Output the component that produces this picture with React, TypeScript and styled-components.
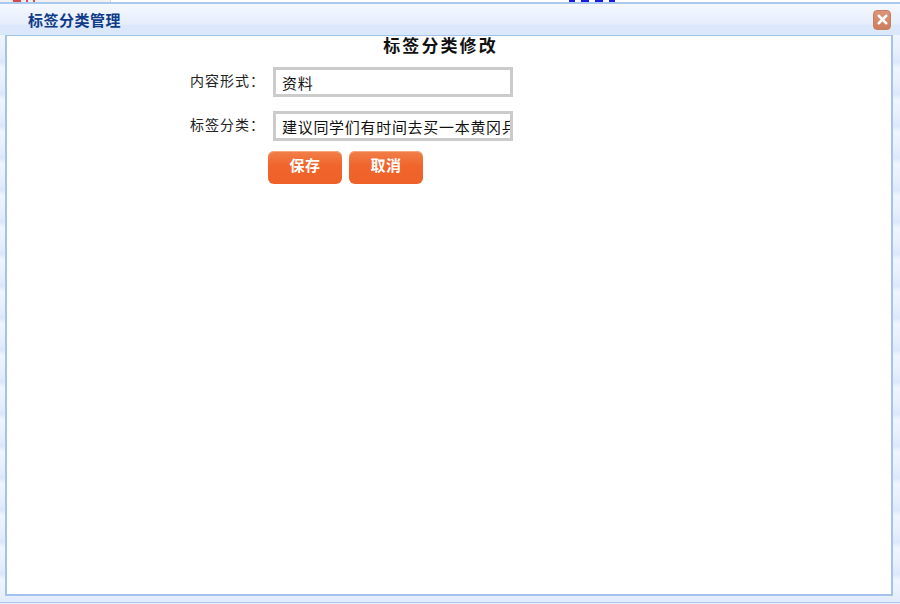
import React from "react";
import styled, { createGlobalStyle } from "styled-components";
import { X } from "lucide-react";

const GlobalStyle = createGlobalStyle`
	html, body {
		margin: 0;
		padding: 0;
		background: #fff;
	}
	body {
		font-family: "Liberation Sans", "Noto Sans CJK SC", sans-serif;
	}
`;

const Page = styled.div`
	width: 900px;
	height: 604px;
	display: flex;
	flex-direction: column;
	overflow: hidden;
	background: #e9f0fd;
`;

const BehindStrip = styled.div`
	height: 2px;
	display: flex;
	background: #fff;
`;

const BehindLeft = styled.div`
	width: 111px;
	display: flex;
	gap: 5px;
	padding-left: 13px;
	box-sizing: border-box;
	background: #f1f1f1;
	border-right: 1px solid #d8d8d8;
`;

const BehindRight = styled.div`
	display: flex;
	gap: 6px;
	margin-left: 458px;
`;

const BehindMark = styled.span<{ $width: number; $color: string }>`
	display: block;
	width: ${({ $width }) => $width}px;
	height: 2px;
	background: ${({ $color }) => $color};
`;

const Win = styled.div`
	flex: 1;
	display: flex;
	flex-direction: column;
	min-height: 0;
	margin-bottom: 1px;
	border-top: 2px solid #a9c8ee;
	border-bottom: 1px solid #a9c8ee;
	background: repeating-linear-gradient(
		180deg,
		#f0f5fe 0,
		#e9f0fd 14px,
		#dce8fb 26px,
		#f0f5fe 32px
	);
`;

const TitleBar = styled.div`
	height: 31px;
	flex: none;
	display: flex;
	align-items: center;
	justify-content: space-between;
	padding: 0 9px 0 28px;
	box-sizing: border-box;
	background: linear-gradient(180deg, #f4f8ff 0, #e6eefc 65%, #dbe7fb 68%, #dbe7fb 100%);
`;

const Title = styled.h1`
	margin: 0;
	font-size: 15px;
	font-weight: bold;
	letter-spacing: 0.5px;
	color: #0f3b88;
`;

const CloseButton = styled.button`
	width: 18px;
	height: 20px;
	padding: 0;
	display: flex;
	align-items: center;
	justify-content: center;
	border: 1px solid #c77d62;
	border-radius: 4px;
	background: linear-gradient(180deg, #dc9478, #cf7c5e);
	color: #fff;
`;

const Content = styled.main`
	flex: 1;
	min-height: 0;
	margin: 0 7px 6px 5px;
	border: 1px solid #a3c3ec;
	border-width: 1px 2px 2px 2px;
	background: #fff;
	display: flex;
	flex-direction: column;
`;

const Heading = styled.h2`
	margin: 0;
	padding: 1px 17px 0 0;
	text-align: center;
	font-size: 17px;
	line-height: 20px;
	font-weight: bold;
	letter-spacing: 2.1px;
	color: #111;
`;

const Row = styled.div`
	display: flex;
	align-items: center;
	gap: 13px;
	padding-left: 183px;
	margin-top: 10px;
	& + & {
		margin-top: 14px;
	}
`;

const Label = styled.label`
	width: 70px;
	font-size: 14px;
	line-height: 30px;
	letter-spacing: 1px;
	white-space: nowrap;
	color: #222;
	margin-top: -3px;
`;

const Field = styled.input`
	width: 240px;
	height: 30px;
	box-sizing: border-box;
	padding: 1px 0 0 6px;
	border: 3px solid #cbcbcb;
	outline: none;
	font-family: inherit;
	font-size: 15px;
	letter-spacing: 0.7px;
	color: #111;
	background: #fff;
`;

const Actions = styled.div`
	display: flex;
	gap: 7px;
	padding-left: 261px;
	margin-top: 10px;
`;

const ActionButton = styled.button`
	width: 74px;
	height: 33px;
	padding: 0 0 6px;
	border: none;
	border-radius: 6px;
	background: linear-gradient(180deg, #f17f49 0, #f1652c 45%, #ee6128 100%);
	box-shadow: inset 0 1px 0 #f7a77f;
	font-family: inherit;
	font-size: 15px;
	font-weight: bold;
	letter-spacing: 0.5px;
	color: #fff;
`;

export default function App() {
	return (
		<Page>
			<GlobalStyle />
			<BehindStrip>
				<BehindLeft>
					<BehindMark $width={8} $color="#d9484c" />
					<BehindMark $width={2} $color="#d9484c" />
					<BehindMark $width={2} $color="#d9484c" />
				</BehindLeft>
				<BehindRight>
					<BehindMark $width={6} $color="#1c1ce0" />
					<BehindMark $width={8} $color="#1c1ce0" />
					<BehindMark $width={8} $color="#1c1ce0" />
					<BehindMark $width={6} $color="#1c1ce0" />
				</BehindRight>
			</BehindStrip>
			<Win>
				<TitleBar>
					<Title>标签分类管理</Title>
					<CloseButton aria-label="关闭">
						<X size={15} strokeWidth={4} />
					</CloseButton>
				</TitleBar>
				<Content>
					<Heading>标签分类修改</Heading>
					<Row>
						<Label>内容形式：</Label>
						<Field readOnly value="资料" />
					</Row>
					<Row>
						<Label>标签分类：</Label>
						<Field readOnly value="建议同学们有时间去买一本黄冈乒乓球" />
					</Row>
					<Actions>
						<ActionButton>保存</ActionButton>
						<ActionButton>取消</ActionButton>
					</Actions>
				</Content>
			</Win>
		</Page>
	);
}
